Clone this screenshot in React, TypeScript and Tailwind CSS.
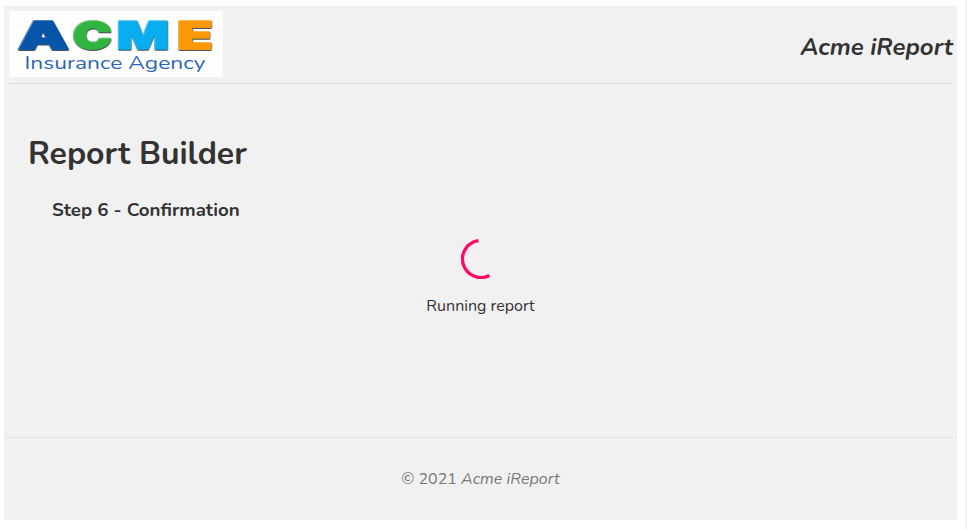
function Logo() {
  return (
    <svg width="214" height="66" viewBox="0 0 214 66" role="img" aria-label="Acme Insurance Agency" className="block shrink-0 bg-[#fefefe]">
      <defs>
        <filter id="bevel" x="-10%" y="-10%" width="120%" height="125%" colorInterpolationFilters="sRGB">
          <feOffset in="SourceAlpha" dx="1" dy="1" result="inset" />
          <feFlood floodColor="#ffffff" floodOpacity="0.3" />
          <feComposite in2="SourceAlpha" operator="in" />
          <feComposite in2="inset" operator="out" result="edge" />
          <feMerge result="lit">
            <feMergeNode in="SourceGraphic" />
            <feMergeNode in="edge" />
          </feMerge>
          <feDropShadow in="lit" dx="0.4" dy="0.9" stdDeviation="0.6" floodColor="#222b35" floodOpacity="0.9" />
        </filter>
      </defs>
      <g className="font-['Inter',sans-serif] font-black" fontSize="38" strokeLinejoin="round" filter="url(#bevel)">
        <text x="9" y="37.8" textLength="50.5" lengthAdjust="spacingAndGlyphs" fill="#0754a8" stroke="#0754a8" strokeWidth="2">A</text>
        <text x="63.5" y="37.5" textLength="39" lengthAdjust="spacingAndGlyphs" fill="#32b441" stroke="#32b441" strokeWidth="1.8">C</text>
        <text x="107.5" y="37.8" textLength="52.5" lengthAdjust="spacingAndGlyphs" fill="#08adf0" stroke="#08adf0" strokeWidth="1.6">M</text>
        <text x="168" y="37.8" textLength="35.5" lengthAdjust="spacingAndGlyphs" fill="#fb9807" stroke="#fb9807" strokeWidth="1.8">E</text>
      </g>
      <text x="15.5" y="58" textLength="181" lengthAdjust="spacingAndGlyphs" fontSize="17" fill="#2d66b2" className="font-['Nunito',sans-serif]">Insurance Agency</text>
    </svg>
  );
}

function Spinner() {
  return (
    <svg width="40" height="40" viewBox="0 0 40 40" fill="none" className="block">
      <path d="M17.5 1.7A18.5 18.5 0 1 0 28.4 36.5" stroke="#ff0868" strokeWidth="3.3" />
    </svg>
  );
}

export default function App() {
  return (
    <div className="flex h-[529px] w-[967px] justify-between overflow-hidden bg-white font-['Nunito',sans-serif] text-[#333]">
      <div className="mt-[6px] ml-1 flex h-[514px] w-[953px] flex-col bg-[#f1f1f1]">
        <header className="mr-[5px] ml-[5px] flex h-[78px] items-start justify-between border-b border-[#dcdcdc] pt-[5px]">
          <Logo />
          <h2 className="mt-[20px] -mr-px text-[24px] leading-[32px] font-bold whitespace-nowrap italic">Acme iReport</h2>
        </header>
        <main className="flex h-[353px] flex-col">
          <h1 className="mt-12 ml-6 text-[32px] leading-[44px] font-bold whitespace-nowrap">Report Builder</h1>
          <h3 className="mt-[21px] ml-12 text-[18.72px] leading-[26px] font-bold whitespace-nowrap">Step 6 - Confirmation</h3>
          <div className="mt-[16px] flex flex-col items-center">
            <Spinner />
            <p className="mt-[15px] text-[16px] leading-6 whitespace-nowrap">Running report</p>
          </div>
        </main>
        <footer className="flex flex-1 justify-center border-t border-[#e5e5e5] pt-[29px] text-[16px] leading-6 text-[#777]">
          <p className="whitespace-nowrap">© 2021 <em className="tracking-[0.05px]">Acme iReport</em></p>
        </footer>
      </div>
      <div className="w-[2px] bg-[#f1f1f1]" />
    </div>
  );
}
